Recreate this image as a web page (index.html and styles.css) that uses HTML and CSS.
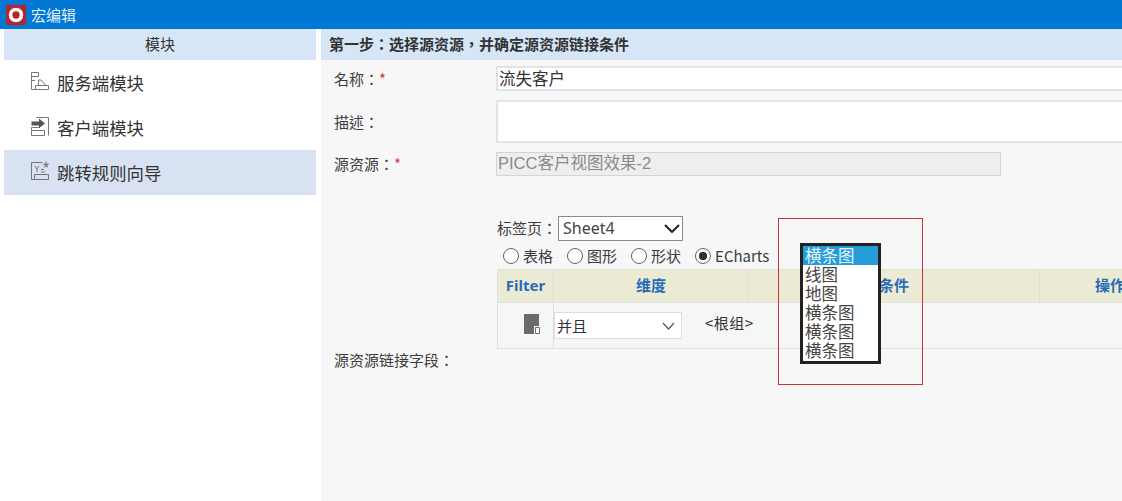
FILE: index.html
```html
<!DOCTYPE html>
<html lang="zh-CN">
<head>
<meta charset="utf-8">
<title>宏编辑</title>
<link rel="stylesheet" href="styles.css">
</head>
<body>
<header class="titlebar">
  <svg class="logo" width="20" height="20" viewBox="0 0 20 20"><rect width="20" height="20" rx="2" fill="#b8232c"/><circle cx="10" cy="10" r="5.500" fill="none" stroke="#fff" stroke-width="3.600"/></svg>
  <span>宏编辑</span>
</header>
<div class="main">
  <aside class="sidebar">
    <div class="side-head">模块</div>
    <div class="side-item">
      <svg class="side-icon" width="20" height="20" viewBox="0 0 20 20" fill="none" stroke="#777" stroke-width="1"><path d="M1.500 18.500V1.500H8.500V5.500M1.500 5.500H8.500M1.500 9.500H5M5.500 18.500H1.500M5.500 18.500V14.500H18.500V18.500Z"/><path d="M8.500 14V9H11L15.500 14" /></svg>
      <span>服务端模块</span>
    </div>
    <div class="side-item">
      <svg class="side-icon" width="20" height="20" viewBox="0 0 20 20" fill="none" stroke="#777" stroke-width="1"><path d="M6.500 1.500H18.500V19.500M1.500 19.500V14.500H14.500V19.500ZM1.500 14.500 1.500 11.500H10"/><path d="M1.500 5.500H9V2.500L15 7.500 9 12V9.500H1.500Z" fill="#555" stroke="none"/></svg>
      <span>客户端模块</span>
    </div>
    <div class="side-item active">
      <svg class="side-icon" width="20" height="20" viewBox="0 0 20 20" fill="none" stroke="#777" stroke-width="1"><path d="M12.500 1.500H1.500V18.500H4.500M4.500 18.500V13.500H18.500V18.500Z"/><path d="M5 5 7 8 9 5M7 8V11M11 8.500H14M11 11H15"/><path d="M16 0 17 2.500 19.500 3 17.500 4.500 18 7 16 5.500 14 7 14.500 4.500 12.500 3 15 2.500Z" fill="#888" stroke="none"/></svg>
      <span>跳转规则向导</span>
    </div>
  </aside>
  <section class="content">
    <h1 class="step" lang="zh-TW">第一步：选择源资源，并确定源资源链接条件</h1>
    <div class="form">
      <div class="label label-name" lang="zh-TW">名称：<i>*</i></div>
      <div class="input input-name">流失客户</div>
      <div class="label label-desc" lang="zh-TW">描述：</div>
      <div class="input input-desc"></div>
      <div class="label label-src" lang="zh-TW">源资源：<i>*</i></div>
      <div class="input input-src">PICC客户视图效果-2</div>
      <div class="label label-link" lang="zh-TW">源资源链接字段：</div>
      <div class="link-body">
        <div class="tabs">
          <span class="label" lang="zh-TW">标签页：</span>
          <div class="sheet">Sheet4
            <svg width="16" height="9" viewBox="0 0 16 9" fill="none" stroke="#222" stroke-width="2"><path d="M1 1 8 8 15 1"/></svg>
          </div>
        </div>
        <div class="radios">
          <span class="radio"><b></b>表格</span>
          <span class="radio"><b></b>图形</span>
          <span class="radio"><b></b>形状</span>
          <span class="radio on"><b></b>ECharts</span>
        </div>
        <div class="table">
          <div class="cell th c1">Filter</div>
          <div class="cell th c2">维度</div>
          <div class="cell th c3">条件</div>
          <div class="cell th c4"><span class="op">操作</span></div>
          <div class="cell td c1 filter-cell">
            <svg width="16" height="20" viewBox="0 0 16 20"><path d="M0 0H15V12H10V20H0Z" fill="#6b6b6b"/><path d="M11.500 13.500H15.500V19.500H11.500Z" fill="#fff" stroke="#6b6b6b"/></svg>
          </div>
          <div class="cell td group-cell">
            <div class="andor">并且
              <svg width="13" height="8" viewBox="0 0 13 8" fill="none" stroke="#555" stroke-width="1.200"><path d="M1 1 6.500 7 12 1"/></svg>
            </div>
            <span class="root">&lt;根组&gt;</span>
          </div>
        </div>
      </div>
    </div>
  </section>
</div>
<div class="highlight"></div>
<ul class="listbox">
  <li class="sel">横条图</li>
  <li>线图</li>
  <li>地图</li>
  <li>横条图</li>
  <li>横条图</li>
  <li>横条图</li>
</ul>
</body>
</html>
```

FILE: styles.css
```css
* { box-sizing: border-box; }
html, body { margin: 0; height: 100%; overflow: hidden; }
body {
  background: #fff;
  color: #333;
  font: 15px/20px "Noto Sans CJK SC", "Noto Sans", sans-serif;
  width: 1122px;
  height: 501px;
  position: relative;
  display: flex;
  flex-direction: column;
}
.titlebar {
  height: 29px;
  flex: none;
  background: #0078d4;
  color: #e8f2fb;
  display: flex;
  align-items: center;
  gap: 5px;
  padding-left: 6px;
  font-size: 15px;
}
.logo { flex: none; }
.main { flex: 1; display: flex; padding-left: 4px; min-height: 0; }
.sidebar { width: 312px; flex: none; background: #fff; }
.side-head {
  height: 31px;
  background: #d6e6f6;
  text-align: center;
  line-height: 30px;
}
.side-item {
  height: 45px;
  display: flex;
  align-items: center;
  padding-left: 26px;
  gap: 7px;
  font-size: 17.400px;
  color: #333;
}
.side-item.active { background: #d8e2f2; }
.side-icon { flex: none; margin-top: -4px; }
.content {
  flex: 1;
  margin-left: 5px;
  background: #f7f7f7;
  overflow: hidden;
  min-width: 0;
}
.step {
  margin: 0;
  height: 31px;
  background: #d6e6f6;
  font-family: "Noto Sans CJK TC", "Noto Sans", sans-serif;
  font-size: 15px;
  font-weight: 700;
  line-height: 30px;
  padding-left: 8px;
  color: #333;
}
.form {
  display: grid;
  grid-template-columns: 162px 640px;
  grid-template-rows: 25px 43px 24px auto;
  row-gap: 9px;
  padding: 6px 0 0 13px;
}
.label { font-family: "Noto Sans CJK TC", "Noto Sans", sans-serif; font-size: 15px; color: #3c3c3c; }
.label i { color: #e2343a; font-style: normal; }
.label-name { align-self: center; }
.label-desc { align-self: center; }
.label-src { align-self: center; }
.label-link { align-self: end; }
.input {
  background: #fff;
  border: 2px solid #e3e3e3;
  font-size: 16.500px;
  line-height: 21px;
  padding-left: 1px;
  color: #333;
}
.input-src {
  width: 505px;
  background: #eee;
  border: 1px solid #d4d4d4;
  color: #8a8a8a;
  font-family: "Liberation Sans", "Noto Sans CJK SC", sans-serif;
  font-size: 16.500px;
  padding-left: 1px;
}
.link-body { padding-top: 31px; margin-left: 1px; padding-bottom: 21px; }
.tabs { display: flex; align-items: center; height: 24px; }
.sheet {
  width: 125px;
  height: 25px;
  border: 1px solid #8a8a8a;
  background: #fff;
  font-family: "Noto Sans", sans-serif;
  font-size: 16px;
  line-height: 22px;
  padding-left: 4px;
  display: flex;
  align-items: center;
  justify-content: space-between;
  padding-right: 2px;
  margin-left: 1px;
  color: #444;
}
.sheet svg { flex: none; }
.radios { display: flex; height: 29px; align-items: center; padding-top: 3px; margin-left: 6px; gap: 14px; font-size: 15px; }
.radio { display: inline-flex; align-items: center; gap: 4px; color: #3c3c3c; }
.radio b {
  width: 16px;
  height: 16px;
  border-radius: 50%;
  border: 1px solid #666;
  background: #fff;
  display: block;
}
.radio.on b { background: radial-gradient(circle, #333 0 4px, #fff 4.500px); }
.table {
  display: grid;
  grid-template-columns: 56px 195px 291px 200px;
  grid-template-rows: 34px 46px;
  border-left: 1px solid #e0e0e0;
}
.cell { border-right: 1px solid #dedede; border-bottom: 1px solid #dedede; }
.th {
  background: #ebebd5;
  border-top: 1px solid #dedede;
  color: #2a6bb8;
  font-weight: 700;
  font-size: 15px;
  text-align: center;
  line-height: 30px;
}
.th.c1 { font-family: "Noto Sans", sans-serif; }
.th.c4 { text-align: left; padding-left: 55px; }
.op { white-space: nowrap; }
.td { background: #f5f6f6; }
.filter-cell { display: flex; justify-content: flex-end; align-items: center; padding-right: 13px; padding-bottom: 3px; }
.group-cell { grid-column: 2 / 5; display: flex; align-items: flex-start; padding-top: 9px; border-right: 0; }
.andor {
  width: 128px;
  height: 27px;
  background: #fff;
  border: 1px solid #ddd;
  padding: 0 6px 0 2px;
  display: flex;
  align-items: center;
  justify-content: space-between;
  font-size: 15px;
  flex: none;
}
.root { margin-left: 23px; font-size: 15px; letter-spacing: 0.500px; white-space: nowrap; line-height: 22px; }
.highlight {
  position: absolute;
  left: 778px;
  top: 218px;
  width: 145px;
  height: 167px;
  border: 1px solid #c9343a;
}
.listbox {
  position: absolute;
  left: 800px;
  top: 243px;
  width: 81px;
  height: 121px;
  margin: 0;
  padding: 0;
  list-style: none;
  background: #fff;
  border: 3px solid #222;
  font-size: 16.500px;
  color: #444;
  overflow: hidden;
}
.listbox li { padding-left: 2px; height: 19px; line-height: 19px; }
.listbox .sel { background: #259cd8; color: #e6f4fb; }
```
